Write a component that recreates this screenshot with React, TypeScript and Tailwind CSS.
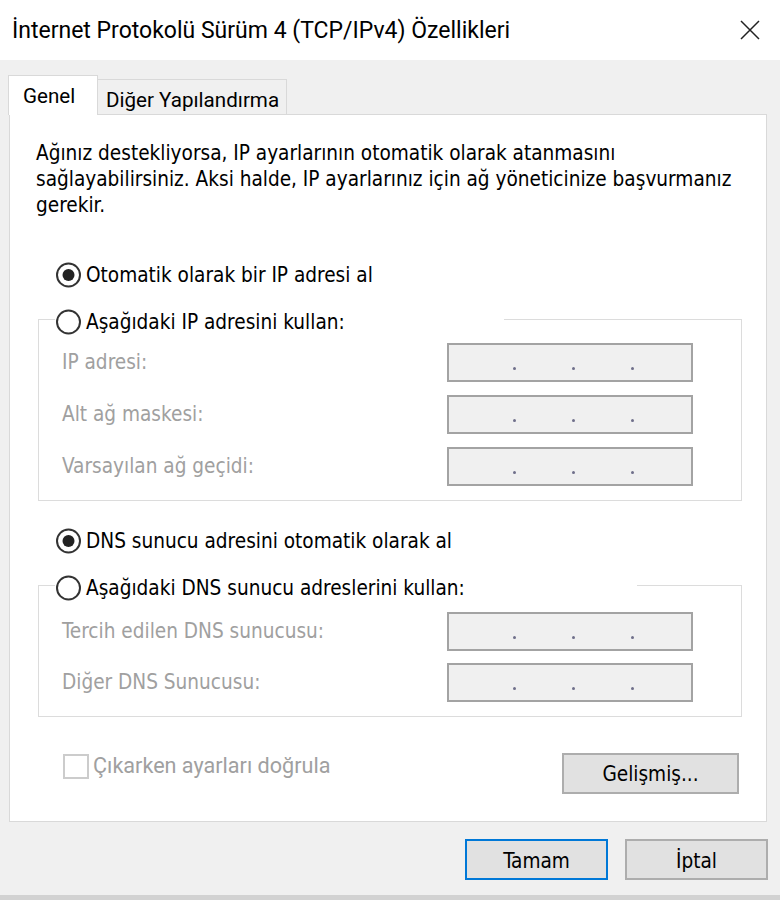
import React from "react";

const body = "font-['DejaVu_Sans_Condensed','DejaVu_Sans',sans-serif]";
const ui = "font-['Roboto','Noto_Sans',sans-serif]";

function Radio({ checked }: { checked?: boolean }) {
  return (
    <svg width="27" height="26" viewBox="0 0 27 26" className="shrink-0">
      <circle cx="13.5" cy="13" r="11.5" fill="white" stroke="#333333" strokeWidth="2" />
      {checked && <circle cx="13.5" cy="13" r="6" fill="#222222" />}
    </svg>
  );
}

function IpBox() {
  return (
    <div className="w-[246px] h-[39px] border-2 border-[#a3a3a3] bg-[#f0f0f0] flex items-end pb-[10px] pl-[64px] gap-[56px]">
      <span className="w-[3px] h-[3px] rounded-full bg-[#6f6f8a]" />
      <span className="w-[3px] h-[3px] rounded-full bg-[#6f6f8a]" />
      <span className="w-[3px] h-[3px] rounded-full bg-[#6f6f8a]" />
    </div>
  );
}

function FieldRow({ label }: { label: string }) {
  return (
    <div className="flex items-center h-[39px] pl-[23px] pr-[48px]">
      <span className={`${body} text-[20.6px] text-[#a0a0a0]`}>{label}</span>
      <div className="ml-auto">
        <IpBox />
      </div>
    </div>
  );
}

function Group({
  label,
  labelWidth,
  fields,
  padTop,
  gap,
}: {
  label: string;
  labelWidth: string;
  fields: string[];
  padTop: string;
  gap: string;
}) {
  return (
    <div className="border-l border-r border-b border-[#dcdcdc] flex flex-col">
      <div className="flex items-center h-0">
        <div className="w-[16px] h-px bg-[#dcdcdc]" />
        <div className={`flex items-center gap-[4px] mt-[6px] ${labelWidth}`}>
          <Radio />
          <span className={`${body} text-[20.6px] text-black`}>{label}</span>
        </div>
        <div className="flex-1 h-px bg-[#dcdcdc]" />
      </div>
      <div className={`flex flex-col ${padTop} ${gap} pb-[14px]`}>
        {fields.map((f) => (
          <FieldRow key={f} label={f} />
        ))}
      </div>
    </div>
  );
}

export default function App() {
  return (
    <div className="w-[780px] h-[900px] flex flex-col bg-[#f0f0f0] overflow-hidden">
      <div className="h-[60px] bg-white flex items-center justify-between pl-[12px] pr-[20px] shrink-0">
        <span className={`${ui} text-[23px] text-black pt-[3px]`}>
          İnternet Protokolü Sürüm 4 (TCP/IPv4) Özellikleri
        </span>
        <svg width="20" height="20" viewBox="0 0 20 20">
          <path d="M1 1 L19 19 M19 1 L1 19" stroke="#222222" strokeWidth="1.5" />
        </svg>
      </div>

      <div className="flex-1 flex flex-col pl-[9px] pr-[12px]">
        <div className="flex items-end pt-[15px] relative z-10">
          <div className="w-[90px] h-[40px] -ml-px -mb-px bg-white border border-b-0 border-[#d9d9d9] pl-[14px] pt-[5px]">
            <span className={`${ui} text-[20.6px] text-black`}>Genel</span>
          </div>
          <div className="w-[189px] h-[35px] bg-[#f0f0f0] border border-l-0 border-b-0 border-[#d9d9d9] pl-[8px] pt-[5px]">
            <span className={`${ui} text-[20.6px] text-black`}>Diğer Yapılandırma</span>
          </div>
        </div>

        <div className="h-[708px] mr-[1px] bg-white border border-[#d9d9d9] flex flex-col pl-[28px] pr-[24px]">
          <p className={`${body} text-[20.6px] leading-[26px] text-black mt-[25px] -ml-[2px]`}>
            Ağınız destekliyorsa, IP ayarlarının otomatik olarak atanmasını
            <br />
            sağlayabilirsiniz. Aksi halde, IP ayarlarınız için ağ yöneticinize başvurmanız
            <br />
            gerekir.
          </p>

          <div className="flex items-center gap-[4px] h-[26px] mt-[44px] ml-[17px]">
            <Radio checked />
            <span className={`${body} text-[20.6px] text-black`}>Otomatik olarak bir IP adresi al</span>
          </div>

          <div className="mt-[31px]">
            <Group
              label="Aşağıdaki IP adresini kullan:"
              labelWidth="w-[449px]"
              fields={["IP adresi:", "Alt ağ maskesi:", "Varsayılan ağ geçidi:"]}
              padTop="pt-[24px]"
              gap="gap-[13px]"
            />
          </div>

          <div className="flex items-center gap-[4px] h-[26px] mt-[27px] ml-[17px]">
            <Radio checked />
            <span className={`${body} text-[20.6px] text-black`}>DNS sunucu adresini otomatik olarak al</span>
          </div>

          <div className="mt-[31px]">
            <Group
              label="Aşağıdaki DNS sunucu adreslerini kullan:"
              labelWidth="w-[582px]"
              fields={["Tercih edilen DNS sunucusu:", "Diğer DNS Sunucusu:"]}
              padTop="pt-[27px]"
              gap="gap-[12px]"
            />
          </div>

          <div className="flex items-start justify-between mt-[33px] pr-[3px]">
            <div className="flex items-center gap-[4px] ml-[25px]">
              <div className="w-[26px] h-[25px] border-2 border-[#cccccc] bg-white" />
              <span className={`${ui} text-[21.6px] text-[#a0a0a0]`}>Çıkarken ayarları doğrula</span>
            </div>
            <button className={`mt-[3px] w-[177px] h-[41px] pt-[2px] bg-[#e1e1e1] border-2 border-[#adadad] ${body} text-[20.6px] text-black`}>
              Gelişmiş...
            </button>
          </div>
        </div>

        <div className="flex justify-end gap-[17px] mt-[17px]">
          <button className={`w-[143px] h-[41px] pt-[3px] bg-[#e1e1e1] border-2 border-[#0078d7] ${body} text-[20.6px] text-black`}>
            Tamam
          </button>
          <button className={`w-[143px] h-[41px] pt-[3px] bg-[#e1e1e1] border-2 border-[#adadad] ${body} text-[20.6px] text-black`}>
            İptal
          </button>
        </div>
      </div>
      <div className="h-[5px] bg-[#d2d2d2] shrink-0" />
    </div>
  );
}
